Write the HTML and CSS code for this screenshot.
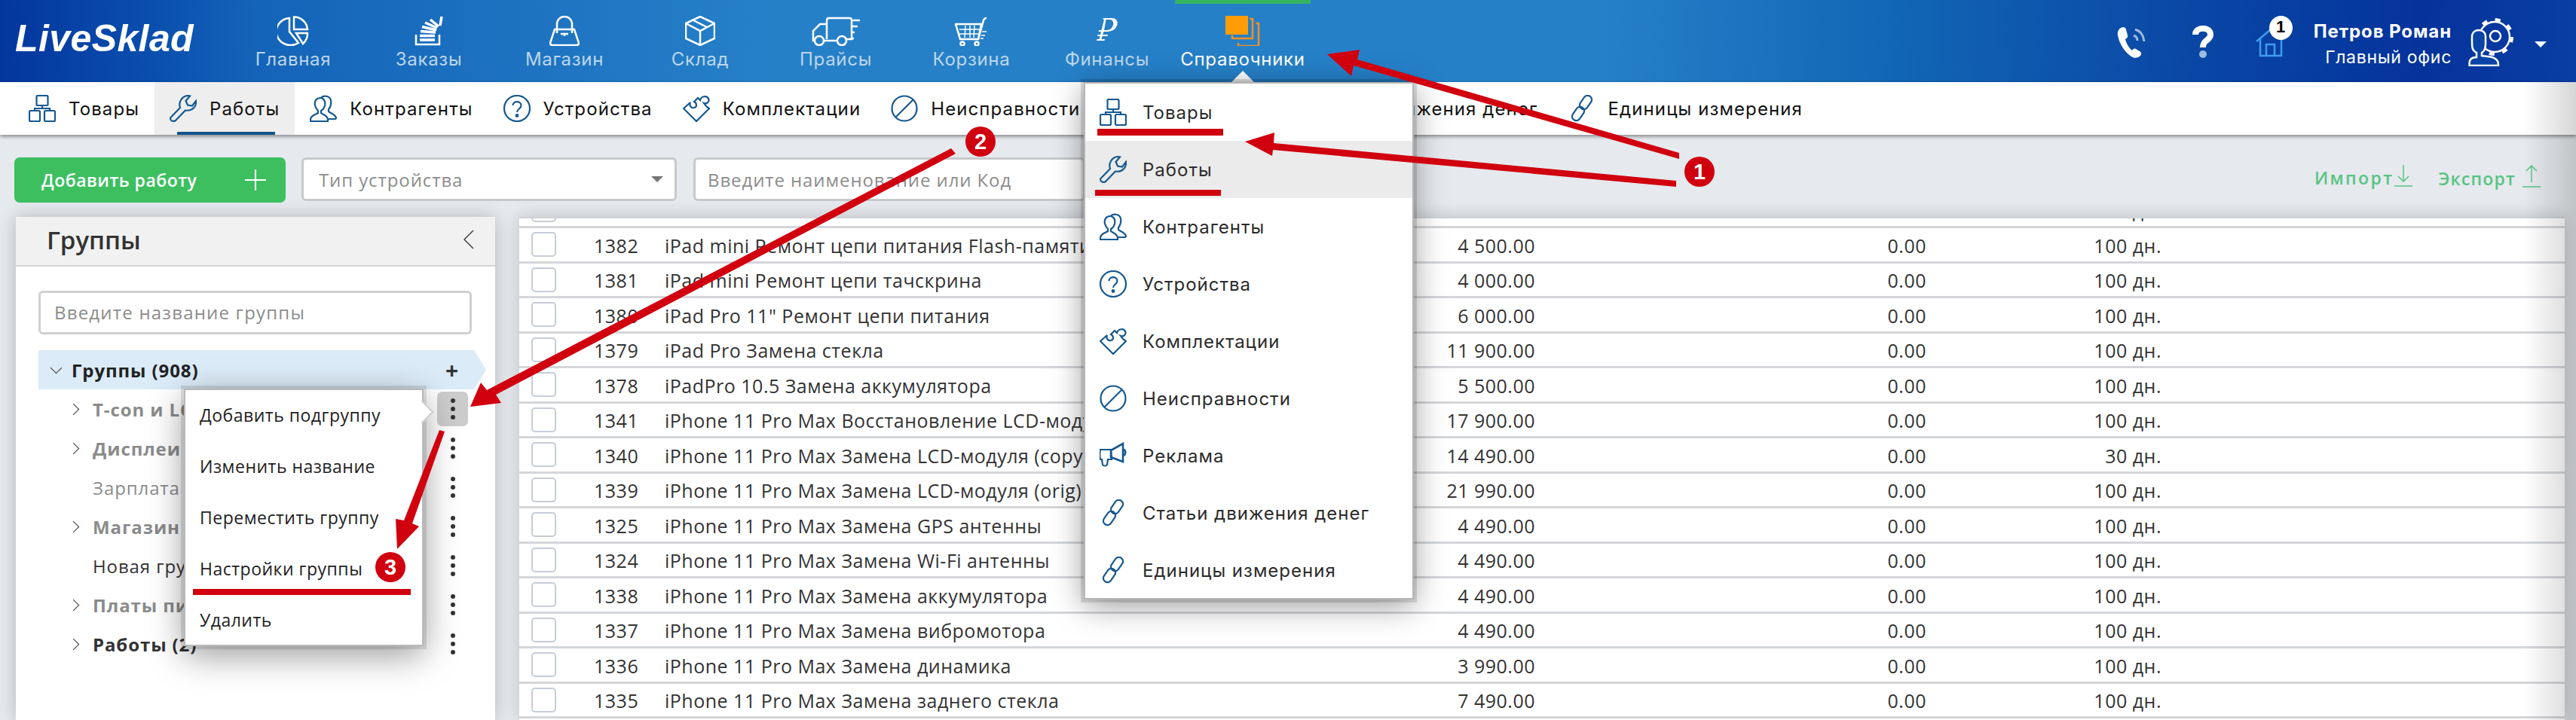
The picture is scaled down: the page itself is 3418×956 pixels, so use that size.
FILE: index.html
```html
<!DOCTYPE html>
<html lang="en">
<head>
    <meta charset="UTF-8">
    <title>LiveSklad</title>
    <link rel="stylesheet" href="styles.css">
</head>
<body>
    <svg class="defs" width="0" height="0">
        <symbol id="i-goods" viewBox="0 0 36 36"><rect x="10.5" y="1" width="15" height="13" rx="1.5"/><path d="M18 14v4M8 21v-3h20v3"/><rect x="1" y="21" width="14" height="14" rx="1.5"/><rect x="21" y="21" width="14" height="14" rx="1.5"/></symbol>
        <symbol id="i-wrench" viewBox="0 0 36 36"><path d="M1.500 30 L14 17 C11.500 10 16 2 24 1 L27 1.500 L21.500 8 L24 13.500 L30 14.500 L35 8 C36 16 29 22 21 20.500 L8 34 C4.500 36.500 -0.500 33 1.500 30Z"/></symbol>
        <symbol id="i-users" viewBox="0 0 36 36"><path d="M14 4C8 4 6 9 7 14c1 4 3 6 4 7v3c-3 2-10 3-10 9v2h23v-2c0-6-7-7-9-9v-3c2-1 4-3 5-7 1-5-1-10-6-10z"/><path d="M15 4c2-3 11-4 13 3 1 5-1 10-3 12v3c2 2 10 4 10 9l-1 1h-9"/></symbol>
        <symbol id="i-help" viewBox="0 0 36 36"><circle cx="18" cy="18" r="17"/><path d="M12.500 14c0-6.500 11-6.500 11 0 0 4.500-5.500 4.500-5.500 9"/><circle cx="18" cy="27.500" r="1.300" class="dot"/></symbol>
        <symbol id="i-puzzle" viewBox="0 0 36 36"><path d="M18 35 1 18l9-8c-2 5 2 8 5 7 4-1 4-6 0-8l5-5 3 3c1-5 9-7 11-2 2 5-3 7-6 6l3 4c1 1 3 2 4 3z"/></symbol>
        <symbol id="i-ban" viewBox="0 0 36 36"><circle cx="18" cy="18" r="16.500"/><path d="M6 30 30 6"/></symbol>
        <symbol id="i-promo" viewBox="0 0 36 36"><path class="solid" d="M0 10h15l1 13h-5l-1 7c-1 2-5 2-6 0l-1-7H1c-1-3-1-10 0-13z"/><path stroke-width="2.600" d="M15 11 31 2v24L15 20zM32 10c3 1 3 6 0 8"/></symbol>
        <symbol id="i-link" viewBox="0 0 36 36"><rect x="13" y="4.500" width="20" height="11" rx="5.500" transform="rotate(-55 23 10)"/><rect x="3" y="19.500" width="20" height="11" rx="5.500" transform="rotate(-55 13 25)"/></symbol>
    </svg>

    <div class="page">
        <header class="topbar">
            <div class="logo">LiveSklad</div>
            <nav class="mainnav">
                <a class="mainnav-item">
                    <svg class="nav-ico" width="42" height="40" viewBox="0 0 42 40"><path d="M16 3V21L28 36A19 18 0 1 1 16 3Z"/><path d="M22 1.500A18 18 0 0 1 40 18H22Z"/><path d="M25 23H40A18 18 0 0 1 34 37Z"/></svg>
                    Главная
                </a>
                <a class="mainnav-item">
                    <svg class="nav-ico" width="38" height="40" viewBox="0 0 38 40"><path d="M2 25V38H33V25"/><path class="thick" d="M7 32H27M7 26.500H27M8 20.500 28 22M10 14.500 29 19M14 9 30 16M21 5 32 14M36 1 34 13"/></svg>
                    Заказы
                </a>
                <a class="mainnav-item">
                    <svg class="nav-ico" width="40" height="40" viewBox="0 0 40 40"><path d="M10 23V11A10 10 0 0 1 30 11V23"/><path d="M7 18H33L39 36Q39 39 36 39H4Q1 39 1 36Z"/><path d="M15 24H25M20 24V27"/></svg>
                    Магазин
                </a>
                <a class="mainnav-item">
                    <svg class="nav-ico" width="40" height="40" viewBox="0 0 40 40"><path d="M20 1 39 10V30L20 39 1 30V10Z"/><path d="M1 10 20 20 39 10M20 20V39M10 5.500 29 15"/></svg>
                    Склад
                </a>
                <a class="mainnav-item">
                    <svg class="nav-ico" width="64" height="40" viewBox="0 0 64 40"><path d="M20 31V6Q20 3 23 3H50Q53 3 53 6V31H46"/><path d="M20 11H11L2 20V33H4M17 33H34"/><circle cx="10" cy="33" r="6"/><circle cx="40" cy="33" r="6"/><path d="M53 6H64M53 14H61M53 22H57M53 30H56"/></svg>
                    Прайсы
                </a>
                <a class="mainnav-item">
                    <svg class="nav-ico" width="44" height="40" viewBox="0 0 44 40"><path d="M1 11H35L31 31H7Z"/><path d="M31 31 38 6Q39 3 42 3"/><path class="thin" d="M6 18H32M6 24H31M14 13 13 29M20 13V29M26 13 25 29M36 21H42M35 26H40M34 30H38"/><circle cx="10" cy="37" r="2.500"/><circle cx="29" cy="37" r="2.500"/></svg>
                    Корзина
                </a>
                <a class="mainnav-item">
                    <svg class="nav-ico ruble" width="28" height="40" viewBox="0 0 28 40"><path d="M9 3H20C27 3 29 8 27 13 25 19 19 21 13 21H9.500L8 25H15L14.500 27H7.500L6.500 31H11L10.500 33H0L.5 31H3.500L4.500 27H1L1.500 25H5L6 21H2.500L3 19H6.500L10 5H8.500ZM12.500 5 10 19H14C18 19 21 16 22 12 23 8 21 5 17 5Z"/></svg>
                    Финансы
                </a>
                <a class="mainnav-item active">
                    <svg class="nav-ico docs" width="46" height="40" viewBox="0 0 46 40"><rect x="0" y="0" width="30" height="25"/><path d="M32 4H36V30H9V26"/><path d="M40 10H44V40H17V36"/></svg>
                    Справочники
                </a>
            </nav>
            <div class="topbar-right">
                <svg class="top-ico" width="44" height="44" viewBox="0 0 44 44"><path fill="#fff" d="M8 2C3 3 0 7 1 13c2 11 9 22 18 28 4 3 9 2 12-1 2-2 1-5-1-6l-5-3c-2-1-4 0-5 2-4-3-8-10-9-15 2-1 4-3 3-5L12 5C11 3 10 2 8 2z"/><path fill="none" stroke="#9ebbe0" stroke-width="3" d="M22 13c3 1 5 3 5 7M24 5c7 2 11 7 12 16"/></svg>
                <svg class="top-ico help" width="28" height="44" viewBox="0 0 28 44"><path fill="none" stroke="#fff" stroke-width="8" d="M4 12C4 1 24 1 24 12 24 20 14 18 14 29"/><circle cx="14" cy="38" r="5" fill="#9ebbe0"/></svg>
                <div class="home">
                    <svg width="38" height="40" viewBox="0 0 38 40"><path fill="none" stroke="#3f9bec" stroke-width="2.500" d="M1 19 20 3M6 15V38H34V15M14 38V23H25V38"/></svg>
                    <span class="home-badge">1</span>
                </div>
                <div class="user">
                    <div class="user-name">Петров Роман</div>
                    <div class="user-office">Главный офис</div>
                </div>
                <svg class="top-ico avatar" width="62" height="64" viewBox="0 0 62 64"><circle cx="35" cy="25" r="20" fill="none" stroke="#fff" stroke-width="2.500"/><circle cx="35" cy="25" r="22.500" fill="none" stroke="#fff" stroke-width="5" stroke-dasharray="7 10.670"/><circle cx="36" cy="24" r="7" fill="none" stroke="#fff" stroke-width="2.500"/><path fill="#0a44a6" stroke="#fff" stroke-width="2.500" d="M11 52V46C5 43 5 38 5 32V25C5 18 10 16 14 16 19 16 23 19 23 25V34C23 39 22 44 18 46V50C24 51 40 50 40 62V63H1.500V60C1.500 54 6 52 11 52Z"/></svg>
                <span class="user-caret"></span>
            </div>
        </header>

        <div class="tabs">
            <a class="tab"><svg class="line-ico"><use href="#i-goods"/></svg>Товары</a>
            <a class="tab active"><svg class="line-ico"><use href="#i-wrench"/></svg>Работы</a>
            <a class="tab"><svg class="line-ico"><use href="#i-users"/></svg>Контрагенты</a>
            <a class="tab"><svg class="line-ico"><use href="#i-help"/></svg>Устройства</a>
            <a class="tab"><svg class="line-ico"><use href="#i-puzzle"/></svg>Комплектации</a>
            <a class="tab"><svg class="line-ico"><use href="#i-ban"/></svg>Неисправности</a>
            <a class="tab promo"><svg class="line-ico"><use href="#i-promo"/></svg>Реклама</a>
            <a class="tab"><svg class="line-ico"><use href="#i-link"/></svg>Статьи движения денег</a>
            <a class="tab"><svg class="line-ico"><use href="#i-link"/></svg>Единицы измерения</a>
        </div>

        <div class="toolbar">
            <button class="add-btn">Добавить работу<span class="add-plus"></span></button>
            <div class="field field-select">Тип устройства<span class="select-caret"></span></div>
            <div class="field field-search">Введите наименование или Код</div>
            <div class="transfer">
                <a class="transfer-link">Импорт<svg width="26" height="34" viewBox="0 0 26 34"><path d="M13 3V25M6 18 13 25 20 18M1 31H25"/></svg></a>
                <a class="transfer-link export">Экспорт<svg width="26" height="34" viewBox="0 0 26 34"><path d="M13 25V3M6 10 13 3 20 10M1 31H25"/></svg></a>
            </div>
        </div>

        <div class="content">
            <aside class="groups">
                <div class="groups-head">
                    <h2>Группы</h2>
                    <svg width="16" height="26" viewBox="0 0 16 26"><path d="M14 1 2 13 14 25"/></svg>
                </div>
                <div class="groups-body">
                    <div class="groups-search">Введите название группы</div>
                    <ul class="tree">
                        <li class="tree-row root"><span class="chev down"></span><b>Группы (908)</b><span class="tree-plus">+</span></li>
                        <li class="tree-row muted strong"><span class="chev"></span>T-con и LCD<span class="kebab current"><i></i><i></i><i></i></span></li>
                        <li class="tree-row muted strong"><span class="chev"></span>Дисплеи<span class="kebab"><i></i><i></i><i></i></span></li>
                        <li class="tree-row muted"><span class="chev none"></span>Зарплата<span class="kebab"><i></i><i></i><i></i></span></li>
                        <li class="tree-row muted strong"><span class="chev"></span>Магазин<span class="kebab"><i></i><i></i><i></i></span></li>
                        <li class="tree-row"><span class="chev none"></span>Новая группа<span class="kebab"><i></i><i></i><i></i></span></li>
                        <li class="tree-row muted strong"><span class="chev"></span>Платы питания<span class="kebab"><i></i><i></i><i></i></span></li>
                        <li class="tree-row strong"><span class="chev"></span>Работы (2)<span class="kebab"><i></i><i></i><i></i></span></li>
                    </ul>
                </div>
            </aside>

            <section class="table-wrap">
                <div class="table">
                    <div class="row"><span class="check"></span><span>1383</span><span>iPad mini Замена стекла</span><span class="num">3 500.00</span><span class="num">0.00</span><span class="num">100 дн.</span></div>
                    <div class="row"><span class="check"></span><span>1382</span><span>iPad mini Ремонт цепи питания Flash-памяти</span><span class="num">4 500.00</span><span class="num">0.00</span><span class="num">100 дн.</span></div>
                    <div class="row"><span class="check"></span><span>1381</span><span>iPad mini Ремонт цепи тачскрина</span><span class="num">4 000.00</span><span class="num">0.00</span><span class="num">100 дн.</span></div>
                    <div class="row"><span class="check"></span><span>1380</span><span>iPad Pro 11" Ремонт цепи питания</span><span class="num">6 000.00</span><span class="num">0.00</span><span class="num">100 дн.</span></div>
                    <div class="row"><span class="check"></span><span>1379</span><span>iPad Pro Замена стекла</span><span class="num">11 900.00</span><span class="num">0.00</span><span class="num">100 дн.</span></div>
                    <div class="row"><span class="check"></span><span>1378</span><span>iPadPro 10.5 Замена аккумулятора</span><span class="num">5 500.00</span><span class="num">0.00</span><span class="num">100 дн.</span></div>
                    <div class="row"><span class="check"></span><span>1341</span><span>iPhone 11 Pro Max Восстановление LCD-модуля</span><span class="num">17 900.00</span><span class="num">0.00</span><span class="num">100 дн.</span></div>
                    <div class="row"><span class="check"></span><span>1340</span><span>iPhone 11 Pro Max Замена LCD-модуля (copy)</span><span class="num">14 490.00</span><span class="num">0.00</span><span class="num">30 дн.</span></div>
                    <div class="row"><span class="check"></span><span>1339</span><span>iPhone 11 Pro Max Замена LCD-модуля (orig)</span><span class="num">21 990.00</span><span class="num">0.00</span><span class="num">100 дн.</span></div>
                    <div class="row"><span class="check"></span><span>1325</span><span>iPhone 11 Pro Max Замена GPS антенны</span><span class="num">4 490.00</span><span class="num">0.00</span><span class="num">100 дн.</span></div>
                    <div class="row"><span class="check"></span><span>1324</span><span>iPhone 11 Pro Max Замена Wi-Fi антенны</span><span class="num">4 490.00</span><span class="num">0.00</span><span class="num">100 дн.</span></div>
                    <div class="row"><span class="check"></span><span>1338</span><span>iPhone 11 Pro Max Замена аккумулятора</span><span class="num">4 490.00</span><span class="num">0.00</span><span class="num">100 дн.</span></div>
                    <div class="row"><span class="check"></span><span>1337</span><span>iPhone 11 Pro Max Замена вибромотора</span><span class="num">4 490.00</span><span class="num">0.00</span><span class="num">100 дн.</span></div>
                    <div class="row"><span class="check"></span><span>1336</span><span>iPhone 11 Pro Max Замена динамика</span><span class="num">3 990.00</span><span class="num">0.00</span><span class="num">100 дн.</span></div>
                    <div class="row"><span class="check"></span><span>1335</span><span>iPhone 11 Pro Max Замена заднего стекла</span><span class="num">7 490.00</span><span class="num">0.00</span><span class="num">100 дн.</span></div>
                </div>
            </section>
        </div>

        <div class="edge-shade"></div>

        <!-- dropdown under Справочники -->
        <div class="ref-menu">
            <a class="ref-item"><svg class="line-ico"><use href="#i-goods"/></svg>Товары</a>
            <a class="ref-item active"><svg class="line-ico"><use href="#i-wrench"/></svg>Работы</a>
            <a class="ref-item"><svg class="line-ico"><use href="#i-users"/></svg>Контрагенты</a>
            <a class="ref-item"><svg class="line-ico"><use href="#i-help"/></svg>Устройства</a>
            <a class="ref-item"><svg class="line-ico"><use href="#i-puzzle"/></svg>Комплектации</a>
            <a class="ref-item"><svg class="line-ico"><use href="#i-ban"/></svg>Неисправности</a>
            <a class="ref-item"><svg class="line-ico"><use href="#i-promo"/></svg>Реклама</a>
            <a class="ref-item"><svg class="line-ico"><use href="#i-link"/></svg>Статьи движения денег</a>
            <a class="ref-item"><svg class="line-ico"><use href="#i-link"/></svg>Единицы измерения</a>
        </div>

        <!-- group context menu -->
        <div class="group-menu">
            <a>Добавить подгруппу</a>
            <a>Изменить название</a>
            <a>Переместить группу</a>
            <a>Настройки группы</a>
            <a>Удалить</a>
        </div>

        <!-- red annotations on top of the screenshot -->
        <svg class="marks" width="3418" height="956" viewBox="0 0 3418 956">
            <rect x="1456" y="171" width="167" height="9"/>
            <rect x="1453" y="252" width="167" height="8"/>
            <rect x="256" y="782" width="289" height="8"/>
            <polygon points="2228,203 2228,211 1796,87 1793,101 1761,72 1804,66 1801,79"/>
            <polygon points="2224,240 2224,248 1689,199 1688,207 1652,188 1691,176 1690,190"/>
            <polygon points="1262,197 1268,204 658,524 665,535 624,540 638,508 646,518"/>
            <polygon points="583,571 590,573 547,695 556,699 527,729 525,689 536,691"/>
            <circle cx="2255" cy="228" r="20"/>
            <circle cx="1301" cy="188" r="20"/>
            <circle cx="518" cy="753" r="20"/>
            <text x="2255" y="238">1</text>
            <text x="1301" y="198">2</text>
            <text x="518" y="763">3</text>
        </svg>
    </div>
</body>
</html>
```

FILE: styles.css
```css
body {
    margin: 0;
    font-family: 'Open Sans', sans-serif;
    color: #333;
    background: #e6e9ed;
}

a {
    color: inherit;
    text-decoration: none;
}

.defs {
    position: absolute;
}

.page {
    position: relative;
    width: 3418px;
    height: 956px;
    overflow: hidden;
    display: flex;
    flex-direction: column;
}

/* top blue bar */
.topbar {
    height: 109px;
    flex: none;
    display: flex;
    background: linear-gradient(90deg, #04369e 0, #0a4fae 6%, #1464b9 10%, #2680c8 30%, #2680c8 62%, #1165b5 74%, #0a47a5 85%, #04339c 94%, #0a3ea3 100%);
}

.logo {
    width: 279px;
    padding-left: 20px;
    font: italic bold 50px/102px 'Liberation Sans', sans-serif;
    letter-spacing: .4px;
    color: #fff;
}

.mainnav {
    display: flex;
}

.mainnav-item {
    position: relative;
    width: 180px;
    height: 109px;
    box-sizing: border-box;
    padding-top: 21px;
    display: flex;
    flex-direction: column;
    align-items: center;
    font: 24px/36px Inter, sans-serif;
    letter-spacing: .7px;
    color: #bdd6ea;
}

.mainnav-item.active {
    color: #fff;
    border-top: 5px solid #34b45d;
    padding-top: 16px;
}

.mainnav-item.active::after {
    content: "";
    position: absolute;
    left: 74px;
    bottom: -1px;
    border: 16px solid transparent;
    border-top: 0;
    border-bottom-color: #fff;
}

.nav-ico {
    display: block;
    flex: none;
    fill: none;
    stroke: #fff;
    stroke-width: 2.500;
}

.nav-ico .thick {
    stroke-width: 3.500;
}

.nav-ico .thin {
    stroke-width: 1.500;
}

.nav-ico.ruble {
    fill: #fff;
    stroke: none;
}

.nav-ico.docs {
    fill: none;
    stroke: #f2901e;
    stroke-width: 2.500;
}

.nav-ico.docs rect {
    fill: #ff9b05;
    stroke: none;
}

.topbar-right {
    flex: 1;
    display: flex;
    justify-content: flex-end;
    align-items: flex-start;
    padding-right: 39px;
    color: #fff;
}

.top-ico {
    margin-top: 34px;
    margin-right: 56px;
}

.top-ico.help {
    margin-right: 56px;
}

.top-ico.avatar {
    margin: 24px 26px 0 22px;
}

.home {
    position: relative;
    margin: 36px 31px 0 0;
    width: 46px;
}

.home-badge {
    position: absolute;
    left: 18px;
    top: -15px;
    width: 31px;
    height: 32px;
    border-radius: 50%;
    background: #fff;
    color: #000;
    font: bold 22px/30px 'Liberation Sans', sans-serif;
    text-align: center;
}

.user {
    text-align: right;
    font-family: Inter, sans-serif;
    padding-top: 25px;
}

.user-name {
    font-size: 24px;
    font-weight: 700;
    line-height: 34px;
    letter-spacing: .9px;
}

.user-office {
    font-size: 23px;
    line-height: 34px;
    letter-spacing: .7px;
}

.user-caret {
    margin-top: 55px;
    border: 8px solid transparent;
    border-bottom: 0;
    border-top-color: #fff;
}

/* white tab row */
.tabs {
    position: relative;
    z-index: 2;
    height: 70px;
    flex: none;
    box-sizing: border-box;
    padding-left: 18px;
    display: flex;
    background: #fff;
    box-shadow: 0 2px 5px rgba(0, 0, 0, .45);
}

.tab {
    position: relative;
    display: flex;
    align-items: center;
    gap: 17px;
    padding: 0 20px;
    height: 70px;
    box-sizing: border-box;
    font: 24px Inter, sans-serif;
    letter-spacing: 1.100px;
    color: #111;
    white-space: nowrap;
}

.tab.promo {
    padding-right: 29px;
}

.tab.active {
    background: #eee;
}

.tab.active::after {
    content: "";
    position: absolute;
    left: 30px;
    right: 26px;
    bottom: 0;
    height: 4px;
    background: #13568f;
}

.line-ico {
    width: 36px;
    height: 36px;
    flex: none;
    fill: none;
    stroke: #15588f;
    stroke-width: 2.200;
    overflow: visible;
}

.line-ico .dot {
    fill: #15588f;
}

.line-ico .solid {
    fill: #15588f;
    stroke: none;
}

/* filter row */
.toolbar {
    height: 109px;
    flex: none;
    box-sizing: border-box;
    padding: 30px 46px 0 19px;
    display: flex;
    align-items: flex-start;
    gap: 21px;
    background: #e6e9ed;
}

.add-btn {
    position: relative;
    width: 360px;
    height: 60px;
    padding: 0 0 0 36px;
    border: none;
    border-radius: 7px;
    background: #3dbf60;
    color: #fff;
    font: 600 23px 'Open Sans', sans-serif;
    letter-spacing: .5px;
    text-align: left;
}

.add-plus {
    position: absolute;
    left: 306px;
    top: 16px;
    width: 28px;
    height: 28px;
    background: linear-gradient(#fff, #fff) center / 28px 2px no-repeat, linear-gradient(#fff, #fff) center / 2px 28px no-repeat;
}

.field {
    height: 58px;
    box-sizing: border-box;
    padding-left: 20px;
    border: 3px solid #c8c9cb;
    border-radius: 6px;
    background: #fff;
    font-size: 24px;
    line-height: 54px;
    letter-spacing: .9px;
    color: #8c8c8c;
}

.field-select {
    position: relative;
    width: 498px;
    margin-right: 1px;
}

.select-caret {
    position: absolute;
    right: 15px;
    top: 22px;
    border: 8px solid transparent;
    border-bottom: 0;
    border-top-color: #777;
}

.field-search {
    width: 520px;
    padding-left: 16px;
}

.transfer {
    margin-left: auto;
    display: flex;
    gap: 33px;
    padding-top: 10px;
}

.transfer-link {
    display: flex;
    align-items: center;
    font-size: 23px;
    font-weight: 600;
    letter-spacing: 2.400px;
    color: #58c484;
}

.transfer-link.export {
    gap: 8px;
    margin-top: 2px;
    letter-spacing: 1.200px;
}

.transfer-link svg {
    fill: none;
    stroke: #58c484;
    stroke-width: 1.500;
    margin-top: -6px;
}

/* main part */
.content {
    flex: 1;
    min-height: 0;
    display: flex;
    padding-left: 21px;
    gap: 32px;
}

.groups {
    width: 636px;
    flex: none;
    background: #fff;
    box-shadow: 0 0 22px rgba(0, 0, 0, .22);
}

.groups-head {
    height: 66px;
    box-sizing: border-box;
    padding: 0 27px 4px 41px;
    display: flex;
    align-items: center;
    justify-content: space-between;
    background: #f1f1f1;
    border-bottom: 2px solid #d5d5d5;
}

.groups-head h2 {
    margin: 0;
    font-size: 33px;
    font-weight: 600;
    color: #333;
}

.groups-head svg {
    fill: none;
    stroke: #444;
    stroke-width: 1.500;
}

.groups-body {
    padding: 32px 31px 0 30px;
}

.groups-search {
    height: 58px;
    box-sizing: border-box;
    padding-left: 18px;
    border: 3px solid #cfcfcf;
    border-radius: 6px;
    font-size: 24px;
    line-height: 52px;
    letter-spacing: 1.200px;
    color: #8c8c8c;
}

.tree {
    list-style: none;
    margin: 21px 0 0;
    padding: 0;
}

.tree-row {
    height: 52px;
    display: flex;
    align-items: center;
    padding-left: 43px;
    font-size: 24px;
    letter-spacing: .9px;
    white-space: nowrap;
}

.tree-row.root {
    width: 594px;
    box-sizing: border-box;
    padding-left: 12px;
    padding-right: 36px;
    background: #dbebf7;
    clip-path: polygon(0 0, 578px 0, 594px 50%, 578px 100%, 0 100%);
    color: #222;
}

.tree-row.muted {
    color: #8b8b8b;
}

.tree-row.strong {
    font-weight: 700;
}

.chev {
    width: 10px;
    height: 10px;
    margin: 0 20px 0 -2px;
    border-top: 1.500px solid #333;
    border-right: 1.500px solid #333;
    transform: rotate(45deg);
    flex: none;
}

.chev.down {
    margin: -6px 15px 0 6px;
    transform: rotate(135deg);
}

.chev.none {
    visibility: hidden;
}

.tree-plus {
    margin-left: auto;
    font-size: 30px;
    font-weight: 700;
    color: #333;
}

.kebab {
    margin-left: auto;
    width: 41px;
    height: 46px;
    margin-right: 5px;
    border-radius: 7px;
    display: flex;
    flex-direction: column;
    align-items: center;
    justify-content: center;
    gap: 5px;
}

.kebab i {
    width: 6px;
    height: 6px;
    border-radius: 50%;
    background: #333;
}

.kebab.current {
    background: #ccc;
}

.table-wrap {
    width: 2714px;
    flex: none;
    height: 100%;
    overflow: hidden;
    background: #fff;
    box-shadow: 0 0 22px rgba(0, 0, 0, .18);
    border-top: 2px solid #cfd2d6;
    box-sizing: border-box;
}

.table {
    margin-top: -33.500px;
}

.row {
    height: 46.500px;
    box-sizing: border-box;
    padding-top: 2px;
    display: grid;
    grid-template-columns: 99px 94px 998px 157px 519px 312px;
    align-items: center;
    border-bottom: 3px solid #d4d6d9;
    font-size: 25px;
    letter-spacing: .5px;
    color: #333;
    white-space: nowrap;
}

.row span {
    overflow: hidden;
}

.check {
    width: 33px;
    height: 33px;
    margin: -2px 0 0 16px;
    box-sizing: border-box;
    border: 2px solid #c6ccd9;
    border-radius: 5px;
    background: #fff;
}

.num {
    text-align: right;
}

.edge-shade {
    position: absolute;
    right: 0;
    top: 109px;
    bottom: 0;
    width: 70px;
    z-index: 3;
    background: linear-gradient(90deg, rgba(0, 0, 0, 0), rgba(0, 0, 0, .16));
}

/* overlays */
.ref-menu {
    position: absolute;
    left: 1438px;
    top: 109px;
    z-index: 5;
    width: 438px;
    height: 687px;
    box-sizing: border-box;
    background: #fff;
    border: 2px solid #b5b5b5;
    box-shadow: 0 0 0 4px rgba(0, 0, 0, .12), 0 8px 40px rgba(0, 0, 0, .4);
}

.ref-item {
    height: 76px;
    box-sizing: border-box;
    padding-left: 19px;
    display: flex;
    align-items: center;
    gap: 21px;
    font: 24px Inter, sans-serif;
    letter-spacing: 1px;
    color: #2b2b2b;
}

.ref-item.active {
    background: #ebebeb;
}

.group-menu {
    position: absolute;
    left: 244px;
    top: 516px;
    z-index: 5;
    width: 318px;
    height: 342px;
    box-sizing: border-box;
    background: #fff;
    border: 2px solid #b9b9b9;
    box-shadow: 0 0 0 4px rgba(0, 0, 0, .1), 0 12px 44px rgba(0, 0, 0, .4);
}

.group-menu::after {
    content: "";
    position: absolute;
    right: -11px;
    top: 18px;
    width: 20px;
    height: 20px;
    background: #fff;
    border-top: 2px solid #ccc;
    border-right: 2px solid #ccc;
    transform: rotate(45deg);
}

.group-menu a {
    display: block;
    height: 68px;
    padding-left: 19px;
    font-size: 23px;
    line-height: 66px;
    letter-spacing: .5px;
    color: #222;
}

.marks {
    position: absolute;
    left: 0;
    top: 0;
    z-index: 6;
    fill: #d0000f;
    pointer-events: none;
}

.marks text {
    fill: #fff;
    font: bold 29px 'Liberation Sans', sans-serif;
    text-anchor: middle;
}
```
